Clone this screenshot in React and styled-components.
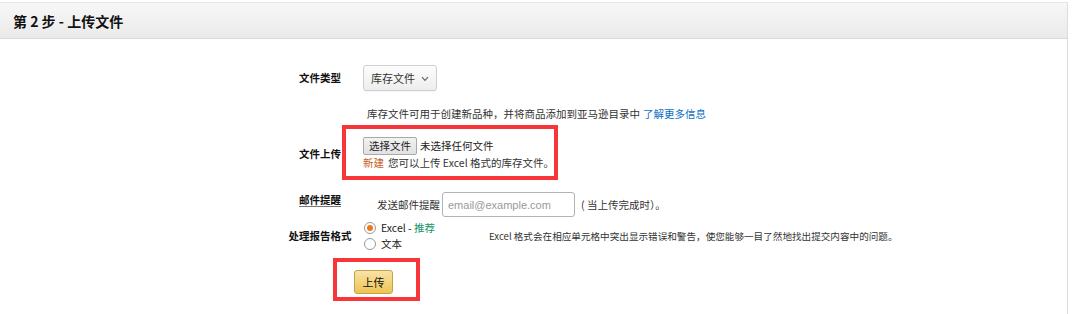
import React from "react";
import styled, { createGlobalStyle } from "styled-components";

const GlobalStyle = createGlobalStyle`
  html, body {
    margin: 0;
    padding: 0;
    background: #ffffff;
  }
  body {
    font-family: "Noto Sans CJK SC", "Noto Sans", "Liberation Sans", sans-serif;
    color: #333;
  }
`;

const Panel = styled.section`
  margin-top: 2px;
  width: 1068px;
  height: 312px;
  box-sizing: border-box;
  border-top: 1px solid #e6e6e6;
  border-right: 1px solid #dcdcdc;
  background: #fff;
`;

const Header = styled.header`
  height: 35px;
  display: flex;
  align-items: center;
  padding-left: 13px;
  background: linear-gradient(#f7f7f7, #eaeaea);
  border-bottom: 1px solid #dadada;
`;

const Title = styled.h2`
  margin: 0;
  font-size: 14px;
  font-weight: 700;
  color: #111;
  line-height: 16px;
`;

const Form = styled.div`
  padding-left: 280px;
  display: flex;
  flex-direction: column;
`;

const Row = styled.div`
  display: flex;
  align-items: ${(p) => p.$align || "center"};
  margin-top: ${(p) => p.$mt}px;
`;

const Label = styled.div`
  width: 80px;
  flex: none;
  text-align: center;
  font-size: 10.5px;
  line-height: 16px;
  font-weight: 700;
  color: #111;
  white-space: nowrap;
  text-decoration: ${(p) => (p.$underline ? "underline" : "none")};
  text-decoration-color: #777;
  text-underline-offset: 2px;
`;

const Value = styled.div`
  margin-left: 3px;
  padding-left: ${(p) => p.$pad || 0}px;
  display: flex;
  align-items: center;
  font-size: 10.5px;
  line-height: 16px;
  color: #333;
  white-space: nowrap;
`;

const Select = styled.div`
  height: 26px;
  width: 74px;
  box-sizing: border-box;
  display: flex;
  align-items: center;
  justify-content: space-between;
  padding: 0 7px 0 7px;
  border: 1px solid #cfcfcf;
  border-radius: 3px;
  background: linear-gradient(#fdfdfd, #ededed);
  box-shadow: 0 1px 0 rgba(0, 0, 0, 0.04);
  font-size: 11px;
  color: #333;
`;

const Chevron = styled.svg`
  width: 8px;
  height: 6px;
  margin-top: 1px;
`;

const Link = styled.a`
  color: #0b6fc2;
  text-decoration: none;
  margin-left: 3px;
`;

const Annotated = styled.div`
  position: relative;
  display: ${(p) => (p.$inline ? "inline-block" : "block")};
`;

const RedBox = styled.div`
  position: absolute;
  left: ${(p) => p.$l}px;
  top: ${(p) => p.$t}px;
  width: ${(p) => p.$w}px;
  height: ${(p) => p.$h}px;
  box-sizing: border-box;
  border: 4px solid #f8363a;
  pointer-events: none;
`;

const FileBlock = styled.div`
  display: flex;
  flex-direction: column;
`;

const FileLine = styled.div`
  display: flex;
  align-items: center;
  height: 18px;
  font-size: 10.5px;
  color: #222;
`;

const FileButton = styled.button`
  width: 54px;
  height: 18px;
  box-sizing: border-box;
  padding: 0;
  margin-right: 3px;
  border: 1px solid #a9a9a9;
  border-radius: 2px;
  background: linear-gradient(#f2f2f2, #e1e1e1);
  font-family: inherit;
  font-size: 10.5px;
  line-height: 16px;
  color: #222;
`;

const Note = styled.div`
  font-size: 10.5px;
  line-height: 16px;
  color: #333;
`;

const NewTag = styled.span`
  color: #c7601c;
  margin-right: 4px;
`;

const EmailText = styled.span`
  margin-right: 2px;
`;

const EmailInput = styled.input`
  width: 133px;
  height: 25px;
  box-sizing: border-box;
  border: 1px solid #b3b3b3;
  border-radius: 3px;
  padding: 0 5px;
  font-family: "Liberation Sans", Arial, sans-serif;
  font-size: 11px;
  color: #333;
  outline: none;
  &::placeholder {
    color: #9a9a9a;
  }
`;

const After = styled.span`
  margin-left: 6px;
`;

const Radios = styled.div`
  width: 126px;
  flex: none;
  display: flex;
  flex-direction: column;
`;

const RadioItem = styled.label`
  display: flex;
  align-items: center;
  height: 16px;
  font-size: 10.5px;
  color: #222;
`;

const RadioCircle = styled.span`
  width: 12px;
  height: 12px;
  margin-left: 1px;
  margin-right: 5px;
  box-sizing: border-box;
  border: 1px solid #9a9a9a;
  border-radius: 50%;
  background: #fff;
  display: flex;
  align-items: center;
  justify-content: center;
  &::after {
    content: "";
    width: 6px;
    height: 6px;
    border-radius: 50%;
    background: ${(p) => (p.$checked ? "#ec7a16" : "transparent")};
  }
`;

const Recommend = styled.span`
  color: #17946a;
`;

const Description = styled.div`
  font-size: 9.6px;
  line-height: 16px;
  color: #333;
`;

const Actions = styled.div`
  margin-top: 16px;
  padding-left: 74px;
`;

const UploadButton = styled.button`
  width: 39px;
  height: 24px;
  box-sizing: border-box;
  padding: 0;
  border: 1px solid #c4a14a;
  border-radius: 3px;
  background: linear-gradient(#f8e3a8, #eec353);
  font-family: inherit;
  font-size: 11px;
  color: #111;
`;

export default function App() {
  return (
    <>
      <GlobalStyle />
      <Panel>
        <Header>
          <Title>第 2 步 - 上传文件</Title>
        </Header>
        <Form>
          <Row $mt={26}>
            <Label>文件类型</Label>
            <Value>
              <Select>
                库存文件
                <Chevron viewBox="0 0 8 6">
                  <path d="M1 1.2 L4 4.4 L7 1.2" fill="none" stroke="#666" strokeWidth="1.2" />
                </Chevron>
              </Select>
            </Value>
          </Row>

          <Row $mt={15}>
            <Label />
            <Value $pad={4}>
              库存文件可用于创建新品种，并将商品添加到亚马逊目录中
              <Link href="#">了解更多信息</Link>
            </Value>
          </Row>

          <Row $mt={15}>
            <Label>文件上传</Label>
            <Value>
              <Annotated>
                <RedBox $l={-21} $t={-12} $w={216} $h={55} />
                <FileBlock>
                  <FileLine>
                    <FileButton type="button">选择文件</FileButton>
                    未选择任何文件
                  </FileLine>
                  <Note>
                    <NewTag>新建</NewTag>您可以上传 Excel 格式的库存文件。
                  </Note>
                </FileBlock>
              </Annotated>
            </Value>
          </Row>

          <Row $mt={21} $align="flex-start">
            <Label $underline>邮件提醒</Label>
            <Value $pad={14}>
              <EmailText>发送邮件提醒</EmailText>
              <EmailInput placeholder="email@example.com" />
              <After>( 当上传完成时）。</After>
            </Value>
          </Row>

          <Row $mt={3}>
            <Label>处理报告格式</Label>
            <Value>
              <Radios>
                <RadioItem>
                  <RadioCircle $checked />
                  Excel - <Recommend>&nbsp;推荐</Recommend>
                </RadioItem>
                <RadioItem>
                  <RadioCircle />
                  文本
                </RadioItem>
              </Radios>
              <Description>
                Excel 格式会在相应单元格中突出显示错误和警告，使您能够一目了然地找出提交内容中的问题。
              </Description>
            </Value>
          </Row>

          <Actions>
            <Annotated $inline>
              <RedBox $l={-21} $t={-10} $w={87} $h={43} />
              <UploadButton type="button">上传</UploadButton>
            </Annotated>
          </Actions>
        </Form>
      </Panel>
    </>
  );
}
